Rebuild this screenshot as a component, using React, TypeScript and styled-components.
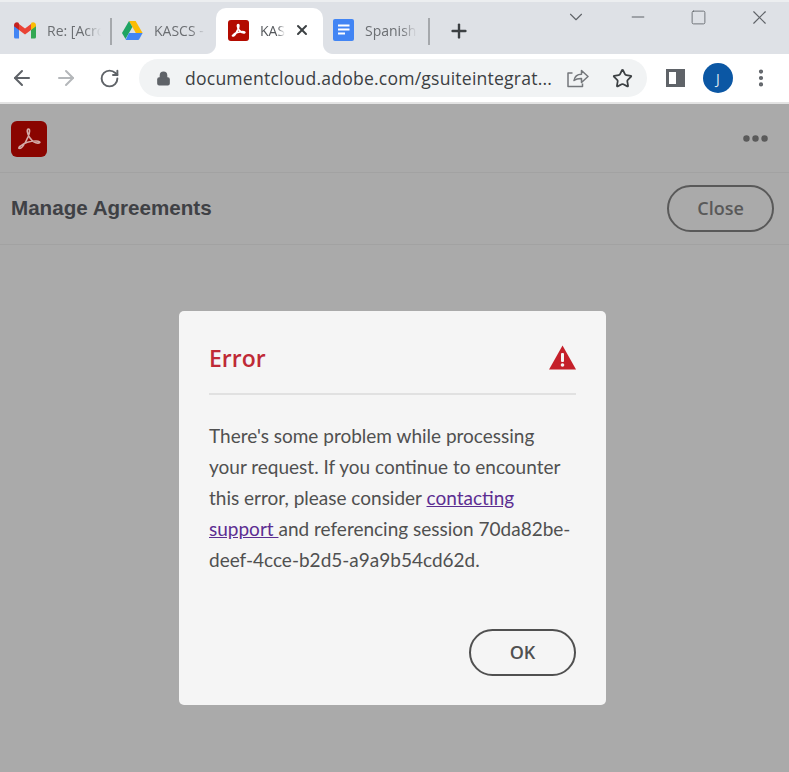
import React from "react";
import styled, { createGlobalStyle } from "styled-components";
import { ArrowLeft, ArrowRight, RotateCw, Lock, Star, X, Plus, ChevronDown, Minus, Square, EllipsisVertical, Ellipsis } from "lucide-react";

const Global = createGlobalStyle`
  html, body { margin: 0; padding: 0; height: 100%; background: #aaaaaa; }
  * { box-sizing: border-box; }
  #root { width: 789px; height: 772px; overflow: hidden; }
`;

const Frame = styled.div`
  position: relative;
  width: 789px;
  height: 772px;
  display: flex;
  flex-direction: column;
  background: #aaaaaa;
  font-family: "Open Sans", "Liberation Sans", sans-serif;
`;

const TabStrip = styled.div`
  height: 54px;
  flex: none;
  display: flex;
  align-items: flex-end;
  background: #dee1e6;
  border-top: 2px solid #eceef0;
`;

const Tab = styled.div<{ $w: number; $pad: number }>`
  width: ${(p) => p.$w}px;
  height: 46px;
  flex: none;
  display: flex;
  align-items: center;
  gap: 11px;
  padding: 0 0 2px ${(p) => p.$pad}px;
  font-size: 14px;
  color: #6b6e72;
`;

const ActiveTab = styled(Tab)`
  position: relative;
  background: #ffffff;
  border-radius: 10px 10px 0 0;

  &::before,
  &::after {
    content: "";
    position: absolute;
    bottom: 0;
    width: 10px;
    height: 10px;
  }
  &::before {
    left: -10px;
    background: radial-gradient(circle at 0 0, #dee1e6 9.5px, #ffffff 10.5px);
  }
  &::after {
    right: -10px;
    background: radial-gradient(circle at 100% 0, #dee1e6 9.5px, #ffffff 10.5px);
  }
`;

const TabLabel = styled.span<{ $w: number; $dark?: boolean }>`
  width: ${(p) => p.$w}px;
  overflow: hidden;
  white-space: nowrap;
  color: ${(p) => (p.$dark ? "#55585c" : "#6b6e72")};
  -webkit-mask-image: linear-gradient(to right, #000 70%, transparent 100%);
  mask-image: linear-gradient(to right, #000 70%, transparent 100%);
`;

const TabClose = styled.span`
  display: flex;
  margin-left: -2px;
  color: #3c4043;
`;

const TabSep = styled.div`
  width: 2px;
  height: 27px;
  margin-bottom: 9px;
  flex: none;
  background: #a5a8ac;
`;

const NewTab = styled.div`
  width: 58px;
  height: 46px;
  display: flex;
  align-items: center;
  justify-content: center;
  color: #3c4043;
`;

const WindowControls = styled.div`
  margin-left: auto;
  align-self: flex-start;
  display: flex;
  align-items: center;
  width: 231px;
  height: 30px;
  color: #5f6368;
  justify-content: space-between;
  padding: 0 18px 0 7px;
`;

const Toolbar = styled.div`
  height: 48px;
  flex: none;
  display: flex;
  align-items: center;
  padding: 0 14px 0 10px;
  background: #ffffff;
`;

const NavButton = styled.div<{ $w: number; $muted?: boolean }>`
  width: ${(p) => p.$w}px;
  flex: none;
  display: flex;
  align-items: center;
  justify-content: center;
  color: ${(p) => (p.$muted ? "#b4b7ba" : "#5f6368")};
`;

const Omnibox = styled.div`
  width: 508px;
  height: 38px;
  margin: 0 0 0 19px;
  flex: none;
  display: flex;
  align-items: center;
  padding: 0 14px 0 17px;
  border-radius: 19px;
  background: #f1f3f4;
  color: #5f6368;
`;

const Url = styled.span`
  flex: 1;
  margin-left: 14px;
  font-size: 17.6px;
  letter-spacing: 0.2px;
  color: #3c4043;
  white-space: nowrap;
`;

const OmniIcons = styled.div`
  display: flex;
  align-items: center;
  gap: 23px;
`;

const SidePanel = styled.div`
  width: 19px;
  height: 18px;
  margin: 0 18px 0 19px;
  flex: none;
  border: 3px solid #5f6368;
  background: linear-gradient(to right, #ffffff 50%, #5f6368 50%);
`;

const Avatar = styled.div`
  width: 30px;
  height: 30px;
  flex: none;
  display: flex;
  align-items: center;
  justify-content: center;
  border-radius: 50%;
  background: #0b57a4;
  color: #dfe8f2;
  font-size: 14px;
`;

const MenuDots = styled.div`
  margin-left: 17px;
  display: flex;
  color: #5f6368;
`;

const LightRule = styled.div`
  height: 2px;
  flex: none;
  background: #e3e3e3;
`;

const AppHeader = styled.header`
  height: 69px;
  flex: none;
  display: flex;
  align-items: center;
  justify-content: space-between;
  padding: 1px 18px 0 11px;
  border-bottom: 1px solid #a2a2a2;
  color: #5a5a5a;
`;

const TitleBar = styled.div`
  height: 72px;
  flex: none;
  display: flex;
  align-items: center;
  justify-content: space-between;
  padding: 0 15px 1px 11px;
  border-bottom: 1px solid #a2a2a2;
`;

const PageTitle = styled.h1`
  margin: 0;
  font-family: "Liberation Sans", Arial, sans-serif;
  font-size: 20.6px;
  font-weight: 700;
  color: #3f4145;
`;

const PillButton = styled.button<{ $w: number; $h: number; $color: string }>`
  width: ${(p) => p.$w}px;
  height: ${(p) => p.$h}px;
  padding: 0 0 1px;
  border: 2px solid ${(p) => p.$color};
  border-radius: ${(p) => p.$h / 2}px;
  background: transparent;
  font-family: "Open Sans", sans-serif;
  font-size: 18px;
  font-weight: 600;
  color: ${(p) => p.$color};
`;

const Overlay = styled.div`
  position: absolute;
  left: 179px;
  top: 311px;
`;

const Dialog = styled.div`
  width: 427px;
  height: 394px;
  display: flex;
  flex-direction: column;
  padding: 0 30px;
  border-radius: 5px;
  background: #f5f5f5;
`;

const DialogHead = styled.div`
  height: 84px;
  flex: none;
  display: flex;
  align-items: center;
  justify-content: space-between;
  padding-top: 11px;
  border-bottom: 2px solid #e1e1e1;
`;

const DialogTitle = styled.h2`
  margin: 0;
  font-size: 23px;
  font-weight: 600;
  color: #bf2a36;
`;

const DialogText = styled.p`
  margin: 25px 0 0;
  font-family: Lato, "Open Sans", sans-serif;
  font-size: 19px;
  line-height: 31px;
  color: #505050;
`;

const SupportLink = styled.a`
  color: #5c2d91;
  text-decoration: underline;
`;

const DialogFooter = styled.div`
  margin-top: auto;
  padding-bottom: 29px;
  display: flex;
  justify-content: flex-end;
`;

const AcrobatIcon = ({ size, radius, bg, fg, stroke }: { size: number; radius: number; bg: string; fg: string; stroke: number }) => (
  <svg width={size} height={size} viewBox="0 0 36 36" style={{ flex: "none" }}>
    <rect width="36" height="36" rx={radius} fill={bg} />
    <path
      d="M8 27C10 29 14 23 17 16C19 11 19 8 17.5 8C15.5 8 16 13 19 17C21.5 20.5 25 22.5 28 22C30 21.5 28.5 20 25 20C20 20 13 22 9.5 25C7.5 26.5 7.5 27.5 8 27Z"
      fill="none"
      stroke={fg}
      strokeWidth={stroke}
      strokeLinejoin="round"
    />
  </svg>
);

const GmailIcon = () => (
  <svg width="22" height="17" viewBox="0 0 22 17" style={{ flex: "none" }}>
    <path d="M0 3.2V15a1.5 1.5 0 0 0 1.5 1.5H5V7.5z" fill="#4285f4" />
    <path d="M22 3.2V15a1.5 1.5 0 0 1-1.5 1.5H17V7.5z" fill="#34a853" />
    <path d="M5 8V2l6 4.6L17 2v6l-6 4.6z" fill="#ea4335" />
    <path d="M0 3.2C0 .8 2.8-.6 4.6.8L5 2v6L0 4.2z" fill="#c5221f" />
    <path d="M22 3.2C22 .8 19.2-.6 17.4.8L17 2v6l5-3.8z" fill="#fbbc04" />
  </svg>
);

const DriveIcon = () => (
  <svg width="21" height="19" viewBox="0 0 21 19" style={{ flex: "none" }}>
    <path d="M7 0h6.6l7 12h-6.8z" fill="#fbbc04" />
    <path d="M7 0l3.4 6L3.5 18 0 12z" fill="#1fa463" />
    <path d="M6.9 12h13.7l-3.4 6.2a1.6 1.6 0 0 1-1.2.7H3.6z" fill="#4285f4" />
  </svg>
);

const DocsIcon = () => (
  <svg width="21" height="22" viewBox="0 0 21 22" style={{ flex: "none" }}>
    <rect width="21" height="22" rx="2" fill="#4285f4" />
    <path d="M5 6.5h11.5M5 10.5h11.5M5 14.5h7" stroke="#fff" strokeWidth="2" />
  </svg>
);

const ShareIcon = () => (
  <svg width="22" height="20" viewBox="0 0 22 20" fill="none" stroke="#74777b" strokeWidth="1.5" strokeLinejoin="round">
    <path d="M7 12.5c.6-4 3.8-6.2 7.5-6.2V2.5L21 8.5l-6.5 6v-4C11.5 10.4 9 11 7 12.5z" />
    <path d="M5.5 5H1v13.5h14.5V15.5" />
  </svg>
);

const WarningIcon = () => (
  <svg width="27" height="25" viewBox="0 0 27 25" style={{ flex: "none" }}>
    <path d="M13.5 0.5L27 24.5H0z" fill="#c5202a" />
    <rect x="12" y="8" width="3" height="9" rx="1" fill="#f5f5f5" />
    <circle cx="13.5" cy="20" r="1.8" fill="#f5f5f5" />
  </svg>
);

export default function App() {
  return (
    <Frame>
      <Global />
      <TabStrip>
        <Tab $w={110} $pad={14}>
          <GmailIcon />
          <TabLabel $w={54}>Re: [Acrobat</TabLabel>
        </Tab>
        <TabSep />
        <Tab $w={104} $pad={10}>
          <DriveIcon />
          <TabLabel $w={52}>KASCS - Google</TabLabel>
        </Tab>
        <ActiveTab $w={107} $pad={12}>
          <AcrobatIcon size={21} radius={5} bg="#b30b00" fg="#ffffff" stroke={3} />
          <TabLabel $w={25} $dark>KASCS</TabLabel>
          <TabClose><X size={16} strokeWidth={3} /></TabClose>
        </ActiveTab>
        <Tab $w={105} $pad={10}>
          <DocsIcon />
          <TabLabel $w={52}>Spanish 1</TabLabel>
        </Tab>
        <TabSep />
        <NewTab><Plus size={22} strokeWidth={2.6} /></NewTab>
        <WindowControls>
          <ChevronDown size={22} strokeWidth={1.2} />
          <Minus size={20} strokeWidth={1.2} />
          <Square size={17} strokeWidth={1.2} />
          <X size={23} strokeWidth={1.2} />
        </WindowControls>
      </TabStrip>
      <Toolbar>
        <NavButton $w={24}><ArrowLeft size={24} strokeWidth={2} /></NavButton>
        <NavButton $w={64} $muted><ArrowRight size={24} strokeWidth={2} /></NavButton>
        <NavButton $w={22}><RotateCw size={21} strokeWidth={2.2} /></NavButton>
        <Omnibox>
          <Lock size={15} fill="#5f6368" strokeWidth={2.2} />
          <Url>documentcloud.adobe.com/gsuiteintegrat...</Url>
          <OmniIcons>
            <ShareIcon />
            <Star size={21} strokeWidth={2} color="#3c4043" />
          </OmniIcons>
        </Omnibox>
        <SidePanel />
        <Avatar>J</Avatar>
        <MenuDots><EllipsisVertical size={22} strokeWidth={2.6} /></MenuDots>
      </Toolbar>
      <LightRule />
      <AppHeader>
        <AcrobatIcon size={36} radius={6} bg="#8a0500" fg="#d4aca8" stroke={1.6} />
        <Ellipsis size={31} strokeWidth={3} fill="currentColor" />
      </AppHeader>
      <TitleBar>
        <PageTitle>Manage Agreements</PageTitle>
        <PillButton $w={107} $h={47} $color="#595959">Close</PillButton>
      </TitleBar>
      <Overlay>
        <Dialog>
          <DialogHead>
            <DialogTitle>Error</DialogTitle>
            <WarningIcon />
          </DialogHead>
          <DialogText>
            There's some problem while processing your request. If you continue to encounter this error, please consider{" "}
            <SupportLink href="#">contacting support </SupportLink>
            and referencing session 70da82be-deef-4cce-b2d5-a9a9b54cd62d.
          </DialogText>
          <DialogFooter>
            <PillButton $w={107} $h={47} $color="#505050">OK</PillButton>
          </DialogFooter>
        </Dialog>
      </Overlay>
    </Frame>
  );
}
